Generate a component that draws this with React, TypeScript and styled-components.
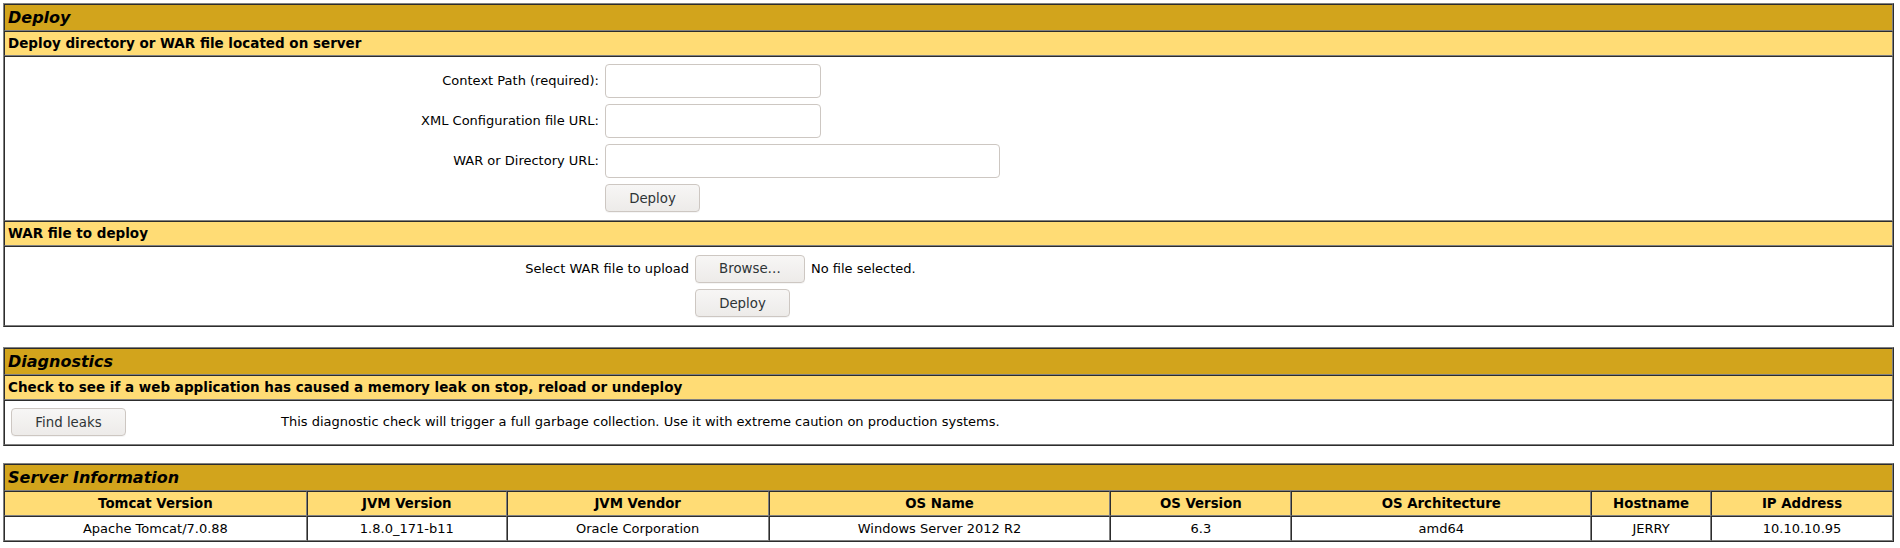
import React from "react";
import styled, { createGlobalStyle } from "styled-components";

const Global = createGlobalStyle`
  html, body { margin: 0; padding: 0; background: #ffffff; }
  body { font-family: "DejaVu Sans", "Liberation Sans", sans-serif; color: #000; }
  * { box-sizing: border-box; }
`;

const Page = styled.div`
  width: 1900px;
  padding: 3px 6px 3px 3px;
  display: flex;
  flex-direction: column;
`;

const Panel = styled.section<{ $space?: number }>`
  margin-top: ${(p) => p.$space ?? 0}px;
  border: 1px outset gray;
  background: #fff;
  display: flex;
  flex-direction: column;
`;

const TitleCell = styled.div`
  border: 1px inset gray;
  padding: 3px;
  background: #d2a41c;
  font-family: "DejaVu Sans", sans-serif;
  font-style: italic;
  font-weight: bold;
  font-size: 16px;
  line-height: 19px;
`;

const HeaderCell = styled.div`
  border: 1px inset gray;
  padding: 3px;
  background: #ffdc75;
  font-family: "DejaVu Sans", sans-serif;
  font-weight: bold;
  font-size: 13.5px;
  line-height: 17px;
`;

const BodyCell = styled.div`
  border: 1px inset gray;
  padding: 4px 3px 5px 3px;
`;

const FormGrid = styled.div<{ $label: number }>`
  display: grid;
  grid-template-columns: ${(p) => p.$label}px 1fr;
  align-items: center;
`;

const LabelCell = styled.div<{ $align?: "left" | "right" }>`
  padding: 3px;
  text-align: ${(p) => p.$align ?? "right"};
  font-size: 13px;
  line-height: 16px;
  white-space: nowrap;
`;

const FieldCell = styled.div<{ $min?: number }>`
  padding: 3px;
  display: flex;
  align-items: center;
  gap: 6px;
  min-height: ${(p) => (p.$min ? `${p.$min}px` : "auto")};
  font-size: 13px;
`;

const TextInput = styled.input<{ $w: number }>`
  width: ${(p) => p.$w}px;
  height: 34px;
  margin: 0;
  border: 1px solid #cdc7c2;
  border-radius: 4px;
  background: #fff;
  font-family: "DejaVu Sans", sans-serif;
  font-size: 13px;
  padding: 0 8px;
  outline: none;
`;

const Button = styled.button<{ $w: number }>`
  width: ${(p) => p.$w}px;
  height: 28px;
  margin: 0;
  padding: 0;
  border: 1px solid #cdc7c2;
  border-radius: 4px;
  background: linear-gradient(#f7f6f5, #edebe9);
  color: #2e3436;
  font-family: "DejaVu Sans", sans-serif;
  font-size: 13.333px;
  box-shadow: 0 1px 0 rgba(0, 0, 0, 0.04);
  cursor: default;
`;

const FileName = styled.span`
  font-size: 13px;
  color: #000;
`;

const InfoGrid = styled.div`
  display: grid;
  grid-template-columns: 303fr 200fr 262fr 342fr 181fr 300fr 120fr 182fr;
`;

const InfoHead = styled.div`
  border: 1px inset gray;
  padding: 3px;
  background: #ffdc75;
  text-align: center;
  font-weight: bold;
  font-size: 13.333px;
  line-height: 17px;
  white-space: nowrap;
`;

const InfoData = styled.div`
  border: 1px inset gray;
  padding: 3px;
  text-align: center;
  font-size: 13px;
  line-height: 17px;
  white-space: nowrap;
`;

const heads = [
  "Tomcat Version",
  "JVM Version",
  "JVM Vendor",
  "OS Name",
  "OS Version",
  "OS Architecture",
  "Hostname",
  "IP Address",
];
const values = [
  "Apache Tomcat/7.0.88",
  "1.8.0_171-b11",
  "Oracle Corporation",
  "Windows Server 2012 R2",
  "6.3",
  "amd64",
  "JERRY",
  "10.10.10.95",
];

export default function App() {
  return (
    <>
      <Global />
      <Page>
        <Panel>
          <TitleCell>Deploy</TitleCell>
          <HeaderCell>Deploy directory or WAR file located on server</HeaderCell>
          <BodyCell>
            <FormGrid $label={594}>
              <LabelCell>Context Path (required):</LabelCell>
              <FieldCell>
                <TextInput $w={216} type="text" />
              </FieldCell>
              <LabelCell>XML Configuration file URL:</LabelCell>
              <FieldCell>
                <TextInput $w={216} type="text" />
              </FieldCell>
              <LabelCell>WAR or Directory URL:</LabelCell>
              <FieldCell>
                <TextInput $w={395} type="text" />
              </FieldCell>
              <LabelCell>&nbsp;</LabelCell>
              <FieldCell>
                <Button $w={95}>Deploy</Button>
              </FieldCell>
            </FormGrid>
          </BodyCell>
          <HeaderCell>WAR file to deploy</HeaderCell>
          <BodyCell>
            <FormGrid $label={684}>
              <LabelCell>Select WAR file to upload</LabelCell>
              <FieldCell $min={35}>
                <Button $w={110}>Browse…</Button>
                <FileName>No file selected.</FileName>
              </FieldCell>
              <LabelCell>&nbsp;</LabelCell>
              <FieldCell>
                <Button $w={95}>Deploy</Button>
              </FieldCell>
            </FormGrid>
          </BodyCell>
        </Panel>

        <Panel $space={20}>
          <TitleCell>Diagnostics</TitleCell>
          <HeaderCell>
            Check to see if a web application has caused a memory leak on stop, reload or undeploy
          </HeaderCell>
          <BodyCell>
            <FormGrid $label={270}>
              <FieldCell>
                <Button $w={115}>Find leaks</Button>
              </FieldCell>
              <LabelCell $align="left">
                This diagnostic check will trigger a full garbage collection. Use it with extreme
                caution on production systems.
              </LabelCell>
            </FormGrid>
          </BodyCell>
        </Panel>

        <Panel $space={17}>
          <TitleCell>Server Information</TitleCell>
          <InfoGrid>
            {heads.map((h) => (
              <InfoHead key={h}>{h}</InfoHead>
            ))}
            {values.map((v, i) => (
              <InfoData key={i}>{v}</InfoData>
            ))}
          </InfoGrid>
        </Panel>
      </Page>
    </>
  );
}
